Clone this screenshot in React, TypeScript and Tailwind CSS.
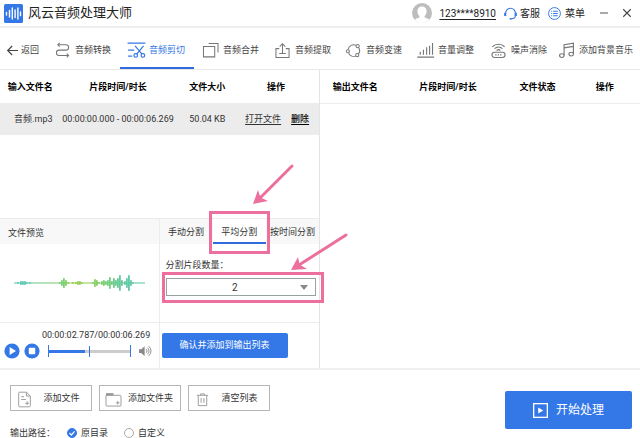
import { ReactNode, useState } from "react";

const Icon = ({
  size = "w-4 h-4",
  children,
}: {
  size?: string;
  children: ReactNode;
}) => (
  <svg
    viewBox="0 0 16 16"
    className={`${size} shrink-0 overflow-visible`}
    fill="none"
    stroke="currentColor"
    strokeWidth="1"
    aria-hidden="true"
  >
    {children}
  </svg>
);

const tools = [
  {
    name: "音频转换",
    icon: (
      <g strokeWidth="1.1">
        <path d="M3 1.8h8.6a2.9 2.9 0 0 1 0 5.8H4.4a2.9 2.9 0 0 0 0 5.8H14.5" />
        <path d="M5 -.2 3 1.8l2 2M12.500 11.400l2 2-2 2" />
      </g>
    ),
  },
  {
    name: "音频剪切",
    icon: (
      <g strokeWidth="1.3">
        <path d="M-1.5 .2h19M-1 7.500h6.500M-1 14h4.500M6.500 3l7.300 8.800M15.500 3l-7.300 8.800" />
        <circle cx="7.2" cy="13.2" r="1.9" />
        <circle cx="14.8" cy="13.2" r="1.9" />
      </g>
    ),
  },
  {
    name: "音频合并",
    icon: (
      <g strokeWidth="1.1">
        <path d="M.5 3.8h12v11H.5z" />
        <path d="M6 .5h10v9.500" />
      </g>
    ),
  },
  {
    name: "音频提取",
    icon: (
      <g strokeWidth="1.1">
        <path d="M4.5 6H1v9.500h14V6h-3.500M8 11V.8M5 3.800l3-3 3 3M4.500 11.200h7" />
      </g>
    ),
  },
  {
    name: "音频变速",
    icon: (
      <g strokeWidth="1.1">
        <path d="M2.300 6.800A6 6 0 0 1 10.800 2.500M13.800 5.200a6 6 0 0 1-.500 6.500M10.400 14a6 6 0 0 1-7.600-3" />
        <circle cx="12.4" cy="3.4" r="1.7" />
        <circle cx="2" cy="8.800" r="1.7" />
        <circle cx="12" cy="13" r="1.7" />
      </g>
    ),
  },
  {
    name: "音量调整",
    icon: (
      <g strokeWidth="1.2">
        <path d="M-.8 15h18M2.400 12.500V9.400M5.800 12.500V7.200M9.200 12.500V4.600M12.400 12.500V2.800M15.500 12.500V0" />
      </g>
    ),
  },
  {
    name: "噪声消除",
    icon: (
      <g strokeWidth="1.2">
        <rect x="1" y="9.800" width="14" height="5.600" rx="2.800" />
        <path d="M1.500 4a9.400 9.400 0 0 1 13 0M3.800 6a6.200 6.200 0 0 1 8.400 0M6 8a3 3 0 0 1 4 0" />
        <path d="M4.500 12.600h7" strokeDasharray="1.4 1.2" />
      </g>
    ),
  },
  {
    name: "添加背景音乐",
    icon: (
      <g strokeWidth="1.2">
        <path d="M5.400 13V1.800l10-1.600v11.300M5.400 5.200l10-1.600" />
        <ellipse cx="3" cy="13.400" rx="2.400" ry="2" />
        <ellipse cx="13" cy="11.800" rx="2.400" ry="2" />
      </g>
    ),
  },
];

// x, half height, colour
const wave: [number, number, string][] = [
  [3, 1, "#5fcab4"],
  [6, 2, "#5fcab4"],
  [8, 2, "#5fcab4"],
  [10, 2, "#5fcab4"],
  [12, 1, "#5fcab4"],
  [15, 1, "#5fcab4"],
  [45, 1, "#7cd088"],
  [47, 3, "#7cd07a"],
  [49, 5, "#7cd070"],
  [51, 3, "#84d068"],
  [53, 1, "#8ccf60"],
  [58, 1, "#96cf58"],
  [61, 1, "#96cf58"],
  [63, 2, "#96cf58"],
  [65, 2, "#96cf58"],
  [67, 1, "#96cf58"],
  [78, 1, "#8ccf60"],
  [80, 4, "#84d068"],
  [82, 3, "#84d068"],
  [84, 1, "#84d068"],
  [87, 2, "#7cd070"],
  [89, 3, "#7cd070"],
  [91, 2, "#7cd07a"],
  [93, 3, "#74ce80"],
  [95, 6, "#74ce80"],
  [97, 2, "#6ccc8c"],
  [99, 5, "#6ccc8c"],
  [101, 3, "#6ccc90"],
  [103, 5, "#64ca98"],
  [105, 8, "#64ca98"],
  [107, 3, "#64ca98"],
  [110, 2, "#5fca9e"],
  [112, 5, "#5fcaa4"],
  [114, 8, "#5fcaa4"],
  [116, 3, "#5fcaa8"],
  [118, 1, "#5fcaac"],
];

const Waveform = () => (
  <svg viewBox="0 0 131 20" className="w-[131px] h-5" aria-hidden="true">
    <defs>
      <linearGradient id="line" x1="0" x2="1" y1="0" y2="0">
        <stop offset="0" stopColor="#6bcfc6" />
        <stop offset="0.5" stopColor="#a8d255" />
        <stop offset="1" stopColor="#6bcfc0" />
      </linearGradient>
    </defs>
    <rect x="0" y="9.4" width="131" height="1.2" fill="url(#line)" />
    {wave.map(([x, h, color]) => (
      <rect
        key={x}
        x={x}
        y={10 - h}
        width="1.8"
        height={h * 2}
        rx="0.8"
        fill={color}
      />
    ))}
  </svg>
);

const Header = () => (
  <header className="flex items-center h-7 pl-1 pr-2 border-b-2 border-[#eeeeee]">
    <svg viewBox="0 0 19 19" className="w-[19px] h-[19px]" aria-hidden="true">
      <rect width="19" height="19" rx="1.5" fill="#3478e8" />
      <path
        d="M2.5 8.5v2.5M5.5 6.5v6.5M8.3 4v11M11.1 6v7.5M13.9 4v11M16.5 8v3.5"
        stroke="#fff"
        strokeWidth="1.4"
        strokeLinecap="round"
      />
    </svg>
    <h1 className="ml-[5px] text-[13px] text-[#222]">风云音频处理大师</h1>
    <div className="flex items-center ml-auto text-[10px] text-[#222]">
      <svg viewBox="0 0 20 20" className="w-5 h-5 mr-[7px]" aria-hidden="true">
        <circle cx="10" cy="10" r="10" fill="#bdbdbd" />
        <path
          d="M10 3.6c2.8 0 4.6 1.9 4.6 4.6 0 2-.9 3.8-2 4.8v1.4c2 .5 3.7 1.3 4.6 2.2A10 10 0 0 1 10 20a10 10 0 0 1-7.2-3.4c.9-.9 2.6-1.7 4.6-2.2V13c-1.1-1-2-2.8-2-4.8 0-2.7 1.8-4.6 4.6-4.6z"
          fill="#fff"
        />
      </svg>
      <a href="#account" className="mr-2 underline underline-offset-2">
        123****8910
      </a>
      <button className="flex items-center gap-[3px] mr-2">
        <span className="text-[#3478e8]">
          <Icon size="w-[13px] h-[13px]">
            <path
              d="M2 8V7.500a6 6 0 0 1 12 0V10.500c0 2.500-2 4-4.500 4"
              strokeWidth="1.3"
            />
            <path d="M1.500 7v4M14.500 7v4" strokeWidth="2.6" />
            <path d="M7 14.500h2.600" strokeWidth="2" />
          </Icon>
        </span>
        客服
      </button>
      <button className="flex items-center gap-1">
        <span className="text-[#3478e8]">
          <Icon size="w-[13px] h-[13px]">
            <circle cx="8" cy="8" r="7.3" strokeWidth="1.2" />
            <path
              d="M4 5.200h1M6.300 5.200H12M4 8h1M6.300 8H12M4 10.800h1M6.300 10.800H12"
              strokeWidth="1.3"
            />
          </Icon>
        </span>
        菜单
      </button>
      <button aria-label="最小化" className="ml-[15px] text-[#555]">
        <Icon size="w-2 h-2">
          <path d="M0 8h16" strokeWidth="2" />
        </Icon>
      </button>
      <button aria-label="关闭" className="ml-3.5 text-[#444]">
        <Icon size="w-[10px] h-[10px]">
          <path d="M2 2l12 12M14 2L2 14" strokeWidth="1.7" />
        </Icon>
      </button>
    </div>
  </header>
);

const Toolbar = () => (
  <nav className="grid grid-cols-[46fr_74fr_74fr_72fr_71fr_72fr_73fr_68fr_90fr] h-[42px] border-b border-[#e8e8e8] text-[#444]">
    <button className="flex items-center gap-[3px] pl-[7px] pt-1 whitespace-nowrap">
      <Icon size="w-[11px] h-[11px]">
        <path d="M16 8H1M7.500 1.500 1 8l6.500 6.500" strokeWidth="1.7" />
      </Icon>
      返回
    </button>
    {tools.map((tool, i) => (
      <button
        key={tool.name}
        className={`flex items-center gap-[3px] pl-1.5 pt-1.5 whitespace-nowrap border-b-2 ${
          i === 1 ? "border-[#2f6bdc] text-[#3478e8]" : "border-transparent"
        }`}
      >
        <span
          className={`flex justify-center w-5 ${i === 1 ? "" : "text-[#777]"}`}
        >
          <Icon size="w-[15px] h-[15px]">{tool.icon}</Icon>
        </span>
        {tool.name}
      </button>
    ))}
  </nav>
);

const InputTable = () => (
  <table className="w-full table-fixed text-center whitespace-nowrap">
    <colgroup>
      <col className="w-[19%]" />
      <col className="w-[36%]" />
      <col className="w-[20%]" />
      <col className="w-[25%]" />
    </colgroup>
    <thead>
      <tr className="h-[33px] text-black">
        <th className="pt-0.5">输入文件名</th>
        <th className="pt-0.5">片段时间/时长</th>
        <th className="pt-0.5">文件大小</th>
        <th className="pt-0.5 pr-1.5">操作</th>
      </tr>
    </thead>
    <tbody>
      <tr className="h-8 bg-[#ececec]">
        <td className="pl-1.5 pt-0.5">音频.mp3</td>
        <td className="pt-0.5">00:00:00.000 - 00:00:06.269</td>
        <td className="pt-0.5">50.04 KB</td>
        <td className="pr-1 pt-0.5">
          <a href="#open" className="underline underline-offset-2">
            打开文件
          </a>
          <a
            href="#delete"
            className="ml-2.5 font-medium text-black underline underline-offset-2"
          >
            删除
          </a>
        </td>
      </tr>
    </tbody>
  </table>
);

const OutputTable = () => (
  <table className="w-full table-fixed text-center whitespace-nowrap">
    <colgroup>
      <col className="w-[22%]" />
      <col className="w-[36%]" />
      <col className="w-[20%]" />
      <col className="w-[22%]" />
    </colgroup>
    <thead>
      <tr className="h-[33px] text-black border-b border-[#ececec]">
        <th className="pt-0.5">输出文件名</th>
        <th className="pt-0.5">片段时间/时长</th>
        <th className="pt-0.5">文件状态</th>
        <th className="pt-0.5">操作</th>
      </tr>
    </thead>
    <tbody />
  </table>
);

const Preview = () => {
  const [position, setPosition] = useState(50);

  return (
    <section className="flex flex-col w-1/2 border-r border-[#ececec]">
      <h2 className="flex items-center h-[25px] px-2 pt-1 bg-[#f8f8f8]">
        文件预览
      </h2>
      <div className="flex items-center justify-center h-[78px]">
        <Waveform />
      </div>
      <div className="h-[46px] pt-1.5 pl-1 pr-2 border-t border-[#ececec]">
        <p className="pl-[38px] leading-3 whitespace-nowrap">
          00:00:02.787/00:00:06.269
        </p>
        <div className="flex items-center h-5 gap-1">
          <button aria-label="播放" className="text-[#3478e8]">
            <Icon>
              <circle cx="8" cy="8" r="7.6" fill="currentColor" stroke="none" />
              <path d="M5.600 4 12 8l-6.400 4z" fill="#fff" stroke="none" />
            </Icon>
          </button>
          <button aria-label="停止" className="text-[#3478e8]">
            <Icon>
              <circle cx="8" cy="8" r="7.6" fill="currentColor" stroke="none" />
              <rect
                x="4.8"
                y="4.8"
                width="6.4"
                height="6.4"
                rx=".8"
                fill="#fff"
                stroke="none"
              />
            </Icon>
          </button>
          <input
            type="range"
            aria-label="播放进度"
            value={position}
            onChange={(e) => setPosition(Number(e.target.value))}
            className="flex-1 min-w-0 h-3 ml-1 mr-1 appearance-none bg-transparent border-x border-[#3478e8] [&::-webkit-slider-runnable-track]:h-[3px] [&::-webkit-slider-runnable-track]:bg-linear-to-r [&::-webkit-slider-runnable-track]:from-[#3478e8] [&::-webkit-slider-runnable-track]:from-45% [&::-webkit-slider-runnable-track]:to-[#cccccc] [&::-webkit-slider-runnable-track]:to-45% [&::-webkit-slider-thumb]:appearance-none [&::-webkit-slider-thumb]:w-px [&::-webkit-slider-thumb]:h-[11px] [&::-webkit-slider-thumb]:-mt-1 [&::-webkit-slider-thumb]:bg-[#3478e8]"
          />
          <button aria-label="音量" className="text-[#888]">
            <Icon size="w-3 h-3">
              <path
                d="M0 5.500h3L7.500 1.500v13L3 10.500H0z"
                fill="currentColor"
                stroke="none"
              />
              <path
                d="M9.500 5.500a3.500 3.500 0 0 1 0 5M11.300 3.500a6 6 0 0 1 0 9M13 1.500a8.500 8.500 0 0 1 0 13"
                strokeWidth="1.2"
              />
            </Icon>
          </button>
        </div>
      </div>
    </section>
  );
};

const Split = () => (
  <section className="flex flex-col w-1/2">
    <div className="grid grid-cols-3 h-[25px] bg-[#f8f8f8] whitespace-nowrap">
      <button className="pt-0.5">手动分割</button>
      <div className="relative flex">
        <button className="flex-1 pt-1 bg-white border-b-2 border-[#2f6bdc]">
          平均分割
        </button>
        <div className="absolute -inset-x-1 -top-2 -bottom-2.5 z-10 border-3 border-[#ec6f9e] pointer-events-none" />
        <svg
          viewBox="0 0 44 44"
          className="absolute left-[38px] -top-14 z-10 w-11 h-11 pointer-events-none"
          aria-hidden="true"
        >
          <path
            d="M41 3 9 35"
            stroke="#ec6f9e"
            strokeWidth="3"
            strokeLinecap="round"
          />
          <path d="M2 41 7 27l2.500 7.500L17 38z" fill="#ec6f9e" />
        </svg>
      </div>
      <button className="pt-0.5">按时间分割</button>
    </div>
    <div className="h-[78px] pl-1.5 pr-[3px] pt-3.5">
      <label htmlFor="count" className="block leading-[14px]">
        分割片段数量：
      </label>
      <div className="relative mt-1.5">
        <select
          id="count"
          defaultValue="2"
          className="block w-full h-[18px] px-3 pr-6 appearance-none bg-white border border-[#98a39d] text-[10px] [text-align-last:center] outline-none"
        >
          <option>2</option>
          <option>3</option>
          <option>4</option>
        </select>
        <svg
          viewBox="0 0 8 5"
          className="absolute right-2 top-[7px] w-2 h-[5px] pointer-events-none"
          aria-hidden="true"
        >
          <path d="M0 0h8L4 5z" fill="#888" />
        </svg>
        <div className="absolute -left-1 -right-2 -top-1.5 -bottom-[7px] z-10 border-3 border-[#ec6f9e] pointer-events-none" />
        <svg
          viewBox="0 0 60 40"
          className="absolute left-[124px] -top-[46px] z-10 w-[60px] h-10 pointer-events-none"
          aria-hidden="true"
        >
          <path
            d="M56 3 9 33"
            stroke="#ec6f9e"
            strokeWidth="3"
            strokeLinecap="round"
          />
          <path d="M1 38 8 25l1.500 7.500L17 37z" fill="#ec6f9e" />
        </svg>
      </div>
    </div>
    <div className="h-[46px] pt-2.5 pl-0.5 border-t border-[#ececec]">
      <button className="w-4/5 h-[25px] rounded-xs bg-[#3478e8] text-white">
        确认并添加到输出列表
      </button>
    </div>
  </section>
);

const fileActions = [
  {
    name: "添加文件",
    icon: (
      <path d="M10 .2H2.800a1 1 0 0 0-1 1v13.600a1 1 0 0 0 1 1h10.400a1 1 0 0 0 1-1V4.300zM10 .2v4.100h4.200M4.500 5h3M4.500 8h5M8.800 12h4M10.800 10v4" />
    ),
  },
  {
    name: "添加文件夹",
    icon: (
      <g>
        <path d="M0 3.500h15a1 1 0 0 1 1 1v9.500a1 1 0 0 1-1 1H1a1 1 0 0 1-1-1zM10.500 11.500h4M12.500 9.500v4" />
        <path d="M0 2.500h8" strokeWidth="2.600" />
      </g>
    ),
  },
  {
    name: "清空列表",
    icon: (
      <path d="M2 3.500h12M6 3.500V2h4v1.500M3.500 3.500v11h9v-11M6.500 6.500v5M9.500 6.500v5" />
    ),
  },
];

const Footer = () => {
  const [target, setTarget] = useState("原目录");

  return (
    <footer className="flex justify-between h-[70px] pl-2.5 pr-2 border-t-2 border-[#f0f0f0]">
      <div>
        <div className="flex gap-[7px] pt-[15px]">
          {fileActions.map((action) => (
            <button
              key={action.name}
              className="flex items-center w-[82px] h-[26px] pl-1.5 pt-0.5 border border-[#b5b5b5] whitespace-nowrap"
            >
              <span className="text-[#999]">
                <Icon size="w-[15px] h-[15px]">{action.icon}</Icon>
              </span>
              <span className="flex-1 text-center">{action.name}</span>
            </button>
          ))}
        </div>
        <fieldset className="flex items-center h-3 mt-4">
          <legend className="float-left w-[57px] leading-3">输出路径：</legend>
          {["原目录", "自定义"].map((name) => (
            <label
              key={name}
              className="relative flex items-center gap-1 mr-4 leading-3"
            >
              <input
                type="radio"
                name="target"
                checked={target === name}
                onChange={() => setTarget(name)}
                className="w-2.5 h-2.5 appearance-none rounded-full border border-[#aaa] checked:bg-[#3478e8] checked:border-[#3478e8]"
              />
              <svg
                viewBox="0 0 10 10"
                className="absolute left-0 top-px w-2.5 h-2.5 pointer-events-none"
                aria-hidden="true"
              >
                <path
                  d="M2.500 5 4.400 7 7.600 3.400"
                  fill="none"
                  stroke="#fff"
                  strokeWidth="1.2"
                />
              </svg>
              {name}
            </label>
          ))}
        </fieldset>
      </div>
      <button className="flex items-center justify-center gap-2 w-[127px] h-[38px] mt-[21px] rounded-xs bg-[#3478e8] text-xs text-white">
        <Icon size="w-[15px] h-[15px]">
          <rect x=".7" y=".7" width="14.6" height="14.6" strokeWidth="1.4" />
          <path
            d="M5.500 4.800 11 8l-5.500 3.200z"
            fill="currentColor"
            stroke="none"
          />
        </Icon>
        开始处理
      </button>
    </footer>
  );
};

const App = () => {
  return (
    <div className="flex flex-col min-h-screen bg-white font-['Roboto','Noto_Sans_CJK_SC',sans-serif] text-[9px] text-[#333]">
      <Header />
      <Toolbar />
      <main className="grid grid-cols-2 flex-1">
        <div className="flex flex-col border-r border-[#e4e4e4]">
          <div className="flex-1">
            <InputTable />
          </div>
          <div className="flex border-t border-[#ececec]">
            <Preview />
            <Split />
          </div>
        </div>
        <div>
          <OutputTable />
        </div>
      </main>
      <Footer />
    </div>
  );
};

export default App;
